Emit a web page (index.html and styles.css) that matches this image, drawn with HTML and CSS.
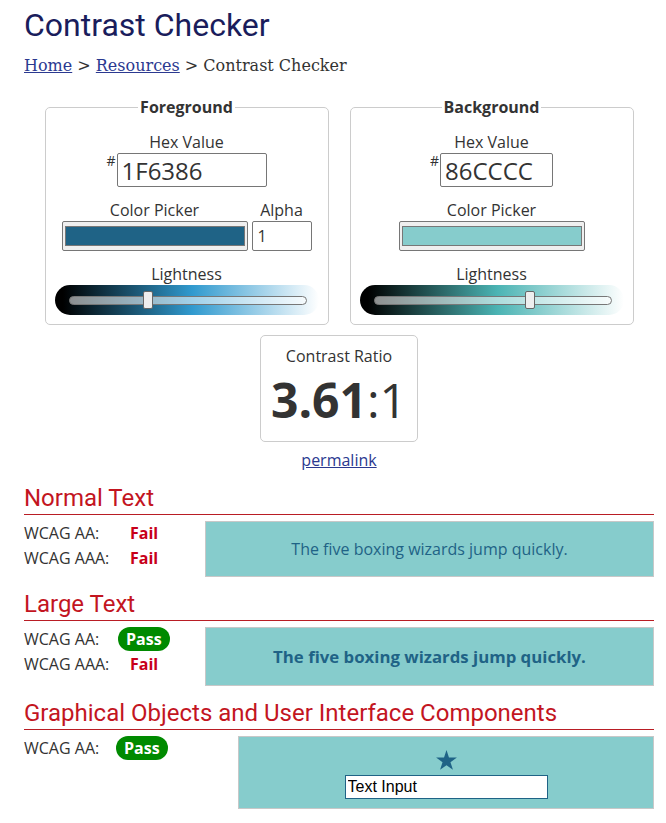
FILE: index.html
```html
<!DOCTYPE html>
<html lang="en">
<head>
<meta charset="utf-8">
<title>Contrast Checker</title>
<link rel="stylesheet" href="styles.css">
</head>
<body>
<main class="page">
  <h1 class="title">Contrast Checker</h1>
  <nav class="crumbs"><a href="#">Home</a> &gt; <a href="#">Resources</a> &gt; Contrast Checker</nav>

  <div class="pickers">
    <fieldset class="panel">
      <legend>Foreground</legend>
      <div class="field-label">Hex Value</div>
      <div class="hex-row"><span class="hash">#</span><input class="hex hex-fg" type="text" value="1F6386"></div>
      <div class="picker-row">
        <div class="col">
          <div class="field-label">Color Picker</div>
          <input class="swatch" type="color" value="#1f6386">
        </div>
        <div class="col">
          <div class="field-label">Alpha</div>
          <input class="alpha" type="text" value="1">
        </div>
      </div>
      <div class="field-label light-label">Lightness</div>
      <div class="lightness lightness-fg">
        <div class="track"><span class="thumb" style="left:73px"></span></div>
      </div>
    </fieldset>

    <fieldset class="panel">
      <legend>Background</legend>
      <div class="field-label">Hex Value</div>
      <div class="hex-row"><span class="hash">#</span><input class="hex hex-bg" type="text" value="86CCCC"></div>
      <div class="picker-row">
        <div class="col">
          <div class="field-label">Color Picker</div>
          <input class="swatch" type="color" value="#86cccc">
        </div>
      </div>
      <div class="field-label light-label">Lightness</div>
      <div class="lightness lightness-bg">
        <div class="track"><span class="thumb" style="left:150px"></span></div>
      </div>
    </fieldset>
  </div>

  <div class="ratio-box">
    <div class="ratio-label">Contrast Ratio</div>
    <div class="ratio"><b>3.61</b>:1</div>
  </div>
  <div class="permalink"><a href="#">permalink</a></div>

  <section class="result">
    <h2>Normal Text</h2>
    <div class="result-body">
      <div class="checks">
        <div class="check"><span class="lvl">WCAG AA:</span><span class="fail">Fail</span></div>
        <div class="check"><span class="lvl">WCAG AAA:</span><span class="fail">Fail</span></div>
      </div>
      <div class="sample sample-normal">The five boxing wizards jump quickly.</div>
    </div>
  </section>

  <section class="result">
    <h2>Large Text</h2>
    <div class="result-body">
      <div class="checks">
        <div class="check"><span class="lvl">WCAG AA:</span><span class="pass">Pass</span></div>
        <div class="check"><span class="lvl">WCAG AAA:</span><span class="fail">Fail</span></div>
      </div>
      <div class="sample sample-large">The five boxing wizards jump quickly.</div>
    </div>
  </section>

  <section class="result">
    <h2>Graphical Objects and User Interface Components</h2>
    <div class="result-body result-body-ui">
      <div class="checks">
        <div class="check"><span class="lvl lvl-ui">WCAG AA:</span><span class="pass">Pass</span></div>
      </div>
      <div class="sample sample-ui">
        <svg class="star" viewBox="-9.6 -10 19.2 18.2" width="21" height="20" aria-hidden="true">
          <polygon points="0,-10 2.245,-3.09 9.511,-3.09 3.633,1.18 5.878,8.09 0,3.82 -5.878,8.09 -3.633,1.18 -9.511,-3.09 -2.245,-3.09"/>
        </svg>
        <input class="ui-input" type="text" value="Text Input">
      </div>
    </div>
  </section>
</main>
</body>
</html>
```

FILE: styles.css
```css
body {
  margin: 0;
  font-family: "Open Sans", sans-serif;
  font-size: 16px;
  color: #333;
  background: #fff;
}

a {
  color: #2b3990;
}

.page {
  padding: 0 12px 0 24px;
}

.title {
  font-family: Roboto, sans-serif;
  font-weight: 400;
  font-size: 32px;
  line-height: 38px;
  margin: 6px 0 0;
  color: #1a1d5c;
}

.crumbs {
  font-family: "DejaVu Serif", serif;
  font-size: 16px;
  line-height: 19px;
  margin-top: 12px;
}

.pickers {
  display: flex;
  justify-content: center;
  gap: 21px;
  margin-top: 21px;
}

.panel {
  width: 284px;
  min-width: 0;
  box-sizing: border-box;
  margin: 0;
  padding: 13px 9px 9px;
  border: 1px solid #ccc;
  border-radius: 5px;
  text-align: center;
}

.panel legend {
  margin: 0 auto;
  padding: 0 2px;
  font-weight: 700;
  font-size: 16px;
  line-height: 22px;
}

.field-label {
  font-size: 16px;
  line-height: 22px;
}

.hex-row {
  display: flex;
  justify-content: center;
  align-items: flex-start;
}

.hash {
  font-size: 14px;
  line-height: 18px;
  margin: -1px 1px 0 0;
}

.hex {
  height: 34px;
  box-sizing: border-box;
  margin: 0;
  padding: 0 4px;
  border: 1px solid #767676;
  border-radius: 2px;
  font-family: "Open Sans", sans-serif;
  font-size: 24px;
  color: #333;
}

.hex-fg {
  width: 150px;
}

.hex-bg {
  width: 113px;
}

.picker-row {
  display: flex;
  justify-content: center;
  gap: 4px;
  margin-top: 12px;
}

.col {
  display: flex;
  flex-direction: column;
  align-items: center;
}

.swatch {
  display: block;
  width: 186px;
  height: 30px;
  box-sizing: border-box;
  margin: 0;
  padding: 1px 0;
  border: 1px solid #767676;
  border-radius: 2px;
  background: #efefef;
}

.swatch::-webkit-color-swatch-wrapper {
  padding: 3px 2px;
}

.swatch::-webkit-color-swatch {
  border: 1px solid #777;
  border-radius: 0;
}

.alpha {
  display: block;
  width: 60px;
  height: 30px;
  box-sizing: border-box;
  margin: 0;
  padding: 0 5px;
  border: 1px solid #767676;
  border-radius: 2px;
  font-family: "Open Sans", sans-serif;
  font-size: 16px;
  color: #333;
}

.light-label {
  margin-top: 12px;
}

.lightness {
  display: flex;
  align-items: center;
  width: 264px;
  height: 30px;
  box-sizing: border-box;
  margin: 0 auto;
  padding: 0 12px 0 14px;
  border-radius: 15px;
}

.lightness-fg {
  background: linear-gradient(to right, #000 3%, hsl(200, 62%, 50%) 52%, #fff 100%);
}

.lightness-bg {
  background: linear-gradient(to right, #000 3%, hsl(180, 41%, 50%) 52%, #fff 100%);
}

.track {
  position: relative;
  flex: 1;
  height: 9px;
  box-sizing: border-box;
  border: 1px solid #777;
  border-radius: 5px;
  background: rgba(255, 255, 255, 0.55);
}

.thumb {
  position: absolute;
  top: -6px;
  width: 10px;
  height: 18px;
  box-sizing: border-box;
  background: #eee;
  border: 1px solid #666;
  border-radius: 2px;
}

.ratio-box {
  width: fit-content;
  margin: 10px auto 0;
  padding: 9px 10px;
  border: 1px solid #ccc;
  border-radius: 5px;
  text-align: center;
}

.ratio-label {
  line-height: 22px;
}

.ratio {
  font-size: 48px;
  line-height: 65px;
}

.ratio b {
  font-weight: 700;
}

.permalink {
  margin-top: 7px;
  line-height: 22px;
  text-align: center;
}

.result {
  margin-top: 13px;
}

.result h2 {
  margin: 0;
  padding-bottom: 2px;
  border-bottom: 1px solid #b91d24;
  font-family: Roboto, sans-serif;
  font-weight: 400;
  font-size: 24px;
  line-height: 28px;
  color: #c3151f;
}

.result-body {
  display: grid;
  grid-template-columns: 181px 1fr;
  margin-top: 6px;
}

.result-body-ui {
  grid-template-columns: 214px 1fr;
}

.check {
  line-height: 25px;
  white-space: nowrap;
}

.lvl {
  display: inline-block;
  width: 94px;
}

.lvl-ui {
  width: 92px;
}

.fail {
  padding-left: 12px;
  font-weight: 700;
  color: #c8001a;
}

.pass {
  display: inline-block;
  padding: 1px 8px;
  line-height: 22px;
  border-radius: 12px;
  background: #008a00;
  color: #fff;
  font-weight: 700;
}

.sample {
  display: flex;
  align-items: center;
  justify-content: center;
  box-sizing: border-box;
  border: 1px solid #c8c8c8;
  background: #86cccc;
  color: #1f6386;
}

.sample-normal {
  height: 56px;
  font-size: 16px;
}

.sample-large {
  height: 59px;
  font-size: 16.8px;
  font-weight: 700;
}

.sample-ui {
  flex-direction: column;
  padding: 13px 0 9px;
}

.star {
  display: block;
  margin-bottom: 5px;
  fill: #1f6386;
}

.ui-input {
  display: block;
  width: 203px;
  height: 24px;
  box-sizing: border-box;
  margin: 0;
  padding: 1px 2px;
  border: 1px solid #1f6386;
  background: #fff;
  font-family: "Liberation Sans", Arial, sans-serif;
  font-size: 16px;
  color: #000;
}
```
